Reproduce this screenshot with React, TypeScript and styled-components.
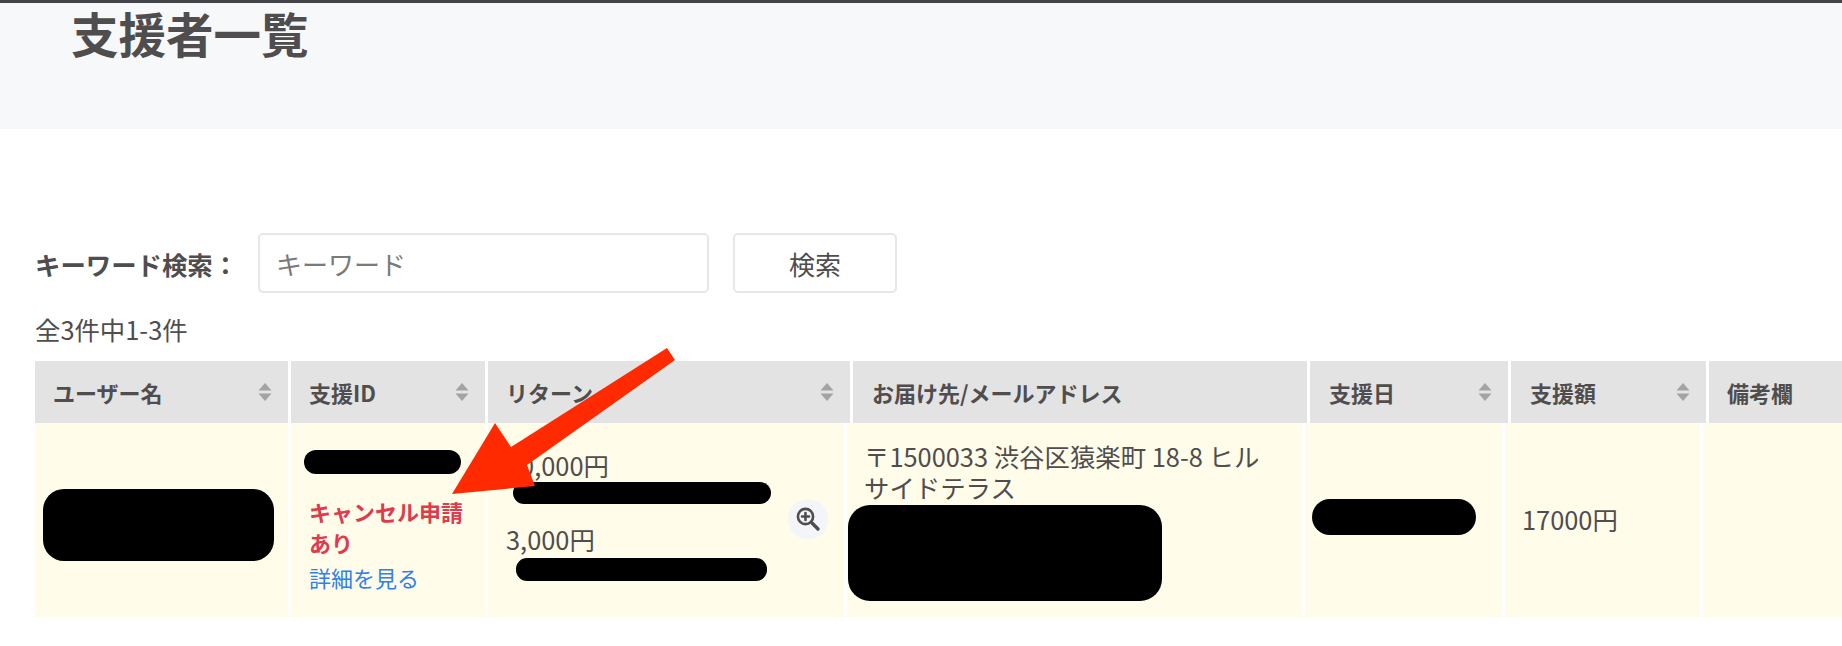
import React from "react";
import styled, { createGlobalStyle } from "styled-components";

const FONT = `"Noto Sans CJK JP", "Noto Sans", sans-serif`;

const Global = createGlobalStyle`
  html, body { margin: 0; padding: 0; background: #fff; }
  body { width: 1842px; height: 646px; overflow: hidden; font-family: ${FONT}; color: #4f4d4d; }
`;

const Page = styled.div`
  position: relative;
  width: 1842px;
  height: 646px;
  overflow: hidden;
`;

const TitleBand = styled.header`
  height: 126px;
  background: #f7f8fa;
  border-top: 3px solid #444548;
  padding-left: 71px;
`;

const Title = styled.h1`
  margin: 0;
  font-size: 47.5px;
  line-height: 60px;
  font-weight: 700;
`;

const Content = styled.main`
  padding: 104px 0 0 35px;
`;

const SearchRow = styled.form`
  display: flex;
  align-items: center;
  height: 60px;
`;

const SearchLabel = styled.label`
  width: 223px;
  font-size: 25.4px;
  font-weight: 700;
  white-space: nowrap;
  padding-top: 2px;
`;

const SearchInput = styled.input`
  box-sizing: border-box;
  width: 451px;
  height: 60px;
  padding: 0 16px;
  border: 2px solid #e6e7ea;
  border-radius: 5px;
  background: #fff;
  font-family: ${FONT};
  font-size: 26px;
  color: #4f4d4d;
  &::placeholder { color: #7a7a7a; opacity: 1; }
`;

const SearchButton = styled.button`
  box-sizing: border-box;
  width: 164px;
  height: 60px;
  margin-left: 24px;
  border: 2px solid #e6e7ea;
  border-radius: 5px;
  background: #fff;
  font-family: ${FONT};
  font-size: 26px;
  color: #4f4d4d;
`;

const Count = styled.div`
  margin-top: 18px;
  font-size: 25.4px;
  line-height: 36px;
`;

const HeadRow = styled.div`
  display: grid;
  grid-template-columns: 253px 194px 362px 454px 198px 195px 1fr;
  gap: 3px;
  height: 62px;
  margin-top: 14px;
`;

const HeadCell = styled.div<{ $pad: number }>`
  display: flex;
  align-items: center;
  justify-content: space-between;
  padding: 0 16px 0 ${(p) => p.$pad}px;
  background: #e3e3e3;
  font-size: 22px;
  font-weight: 700;
  white-space: nowrap;
`;

const BodyRow = styled.div`
  display: grid;
  grid-template-columns: 253px 197px 359px 458px 200px 198px 1fr;
  height: 194px;
  background: #fffcea;
`;

const BodyCell = styled.div`
  box-sizing: border-box;
  height: 192px;
  border-left: 3px solid #fff;
  font-size: 25.4px;
  line-height: 32px;
  &:first-child { border-left: 0; }
`;

const UserCell = styled(BodyCell)`
  display: flex;
  align-items: center;
  padding: 12px 0 0 8px;
`;

const IdCell = styled(BodyCell)`
  padding: 27px 10px 0 18px;
  font-size: 22px;
`;

const ReturnCell = styled(BodyCell)`
  display: flex;
  align-items: center;
  justify-content: space-between;
  padding: 0 16px 0 18px;
`;

const AddressCell = styled(BodyCell)`
  padding: 18px 28px 0 17px;
  line-height: 31px;
`;

const DateCell = styled(BodyCell)`
  display: flex;
  align-items: center;
  padding: 0 0 4px 7px;
`;

const AmountCell = styled(BodyCell)`
  display: flex;
  align-items: center;
  padding: 0 0 0 17px;
`;

const Redacted = styled.div<{ $w: number; $h: number; $r: number; $x?: number; $top?: number }>`
  width: ${(p) => p.$w}px;
  height: ${(p) => p.$h}px;
  border-radius: ${(p) => p.$r}px;
  background: #000;
  margin-left: ${(p) => p.$x ?? 0}px;
  margin-top: ${(p) => p.$top ?? 0}px;
`;

const CancelNotice = styled.div`
  margin-top: 22px;
  font-weight: 700;
  line-height: 31px;
  color: #e03a4e;
`;

const DetailLink = styled.a`
  display: block;
  margin-top: 3px;
  color: #2f80ed;
  font-size: 22px;
`;

const ReturnList = styled.div`
  align-self: flex-start;
  padding-top: 26px;
`;

const ReturnAmount = styled.div<{ $top?: number }>`
  margin-top: ${(p) => p.$top ?? 0}px;
`;

const ZoomButton = styled.span`
  display: flex;
  align-items: center;
  justify-content: center;
  width: 40px;
  height: 40px;
  border-radius: 50%;
  background: #f4f5f8;
`;

const Address = styled.div`
  word-break: break-all;
`;

const SortGlyph = styled.svg`
  flex: none;
  width: 14px;
  height: 18px;
`;

const ArrowOverlay = styled.svg`
  position: absolute;
  left: 0;
  top: 0;
  width: 1842px;
  height: 646px;
  pointer-events: none;
`;

const Sort = () => (
  <SortGlyph viewBox="0 0 14 18">
    <path d="M7 0 L13.5 7.5 H0.5 Z M0.5 10.5 H13.5 L7 18 Z" fill="#a3a3a3" />
  </SortGlyph>
);

const columns: { label: string; pad: number; sort: boolean }[] = [
  { label: "ユーザー名", pad: 18, sort: true },
  { label: "支援ID", pad: 18, sort: true },
  { label: "リターン", pad: 18, sort: true },
  { label: "お届け先/メールアドレス", pad: 19, sort: false },
  { label: "支援日", pad: 19, sort: true },
  { label: "支援額", pad: 19, sort: true },
  { label: "備考欄", pad: 18, sort: false },
];

export default function App() {
  return (
    <Page>
      <Global />
      <TitleBand>
        <Title>支援者一覧</Title>
      </TitleBand>
      <Content>
        <SearchRow onSubmit={(e) => e.preventDefault()}>
          <SearchLabel>キーワード検索：</SearchLabel>
          <SearchInput placeholder="キーワード" />
          <SearchButton>検索</SearchButton>
        </SearchRow>
        <Count>全3件中1-3件</Count>
        <HeadRow>
          {columns.map((c) => (
            <HeadCell key={c.label} $pad={c.pad}>
              <span>{c.label}</span>
              {c.sort && <Sort />}
            </HeadCell>
          ))}
        </HeadRow>
        <BodyRow>
          <UserCell>
            <Redacted $w={231} $h={72} $r={21} />
          </UserCell>
          <IdCell>
            <Redacted $w={157} $h={24} $r={12} $x={-5} />
            <CancelNotice>キャンセル申請あり</CancelNotice>
            <DetailLink>詳細を見る</DetailLink>
          </IdCell>
          <ReturnCell>
            <ReturnList>
              <ReturnAmount>10,000円</ReturnAmount>
              <Redacted $w={258} $h={22} $r={11} $x={7} $top={1} />
              <ReturnAmount $top={19}>3,000円</ReturnAmount>
              <Redacted $w={251} $h={23} $r={11} $x={10} $top={3} />
            </ReturnList>
            <ZoomButton>
              <svg width="26" height="26" viewBox="0 0 26 26" fill="none" stroke="#4f4d4d" strokeWidth="2.6" strokeLinecap="round">
                <circle cx="10.5" cy="10.5" r="7.6" />
                <path d="M17 17 L23 23" strokeWidth="3.4" />
                <path d="M10.5 7 V14 M7 10.5 H14" />
              </svg>
            </ZoomButton>
          </ReturnCell>
          <AddressCell>
            <Address>〒1500033 渋谷区猿楽町 18-8 ヒルサイドテラス</Address>
            <Redacted $w={314} $h={96} $r={22} $x={-16} $top={2} />
          </AddressCell>
          <DateCell>
            <Redacted $w={164} $h={36} $r={18} />
          </DateCell>
          <AmountCell>17000円</AmountCell>
          <BodyCell />
        </BodyRow>
      </Content>
      <ArrowOverlay viewBox="0 0 1842 646">
        <polygon points="667,348 675,360 527,465 535,486 452,494 495,423 511,447" fill="#ff2a00" />
      </ArrowOverlay>
    </Page>
  );
}
